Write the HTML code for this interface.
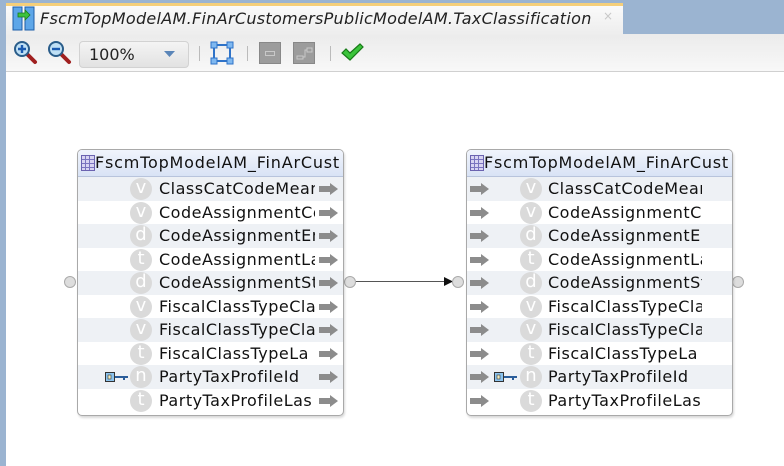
<!DOCTYPE html>
<html><head><meta charset="utf-8"><style>
*{margin:0;padding:0;box-sizing:border-box}
body{width:784px;height:466px;position:relative;overflow:hidden;background:#fff;font-family:"DejaVu Sans","Liberation Sans",sans-serif}
.abs{position:absolute}
svg{display:block}
.box{position:absolute;top:149px;width:267px;height:267px;border:1px solid #a9a9a9;border-radius:5px;background:#fff;box-shadow:1px 2px 2px rgba(0,0,0,.15);overflow:hidden}
.hdr{position:absolute;left:0;top:0;width:100%;height:27px;background:linear-gradient(#f0f4fc,#d9e3f5);border-bottom:1px solid #b8c4dc;font-size:16px;letter-spacing:0.8px;line-height:26px;color:#111;padding-left:17px;white-space:nowrap;overflow:hidden}
.grid{position:absolute;left:3px;top:5px;width:14px;height:16px;border:1px solid #6b63b0;background:
linear-gradient(90deg,transparent 3px,#7a74c0 3px,#7a74c0 4px,transparent 4px,transparent 7px,#7a74c0 7px,#7a74c0 8px,transparent 8px),
linear-gradient(transparent 3px,#7a74c0 3px,#7a74c0 4px,transparent 4px,transparent 7px,#7a74c0 7px,#7a74c0 8px,transparent 8px,transparent 11px,#7a74c0 11px,#7a74c0 12px,transparent 12px),#d8d4f2}
.row{position:absolute;left:0;width:100%;height:23.5px}
.s{background:#eef1f5}
.ic{position:absolute;width:22px;height:22px;border-radius:50%;background:#dadada;color:#fff;font-size:18px;line-height:20px;text-align:center}
.tx{position:absolute;font-size:16px;letter-spacing:0.5px;line-height:23px;color:#111;white-space:nowrap;overflow:hidden}
.ar{position:absolute;width:20px;height:12px}
.port{position:absolute;width:12px;height:12px;border-radius:50%;background:#ddd;border:1px solid #aaa}
</style></head><body>
<div class="abs" style="left:0;top:0;width:784px;height:466px;background:#9bb4d1"></div>
<div class="abs" style="left:6px;top:34px;width:778px;height:432px;background:#fff"></div>
<div class="abs" style="left:6px;top:34px;width:778px;height:38px;background:linear-gradient(#ebebeb,#f8f8f8);border-bottom:1px solid #d0d0d0"></div>
<div class="abs" style="left:6px;top:3px;width:617px;height:32px;background:linear-gradient(#fafafa,#ededed);border-top:3px solid #f5cf7a"></div>
<svg class="abs" style="left:12px;top:6px" width="24" height="26" viewBox="0 0 24 26"><rect x="1" y="1" width="9" height="23" fill="#5da6e8" stroke="#1f5fa8"/><rect x="13" y="1" width="9" height="23" fill="#5da6e8" stroke="#1f5fa8"/><path d="M6 7h7v-3l5 5-5 5v-3H6z" fill="#3cc23c" stroke="#187a18" stroke-width=".8"/></svg>
<div class="abs" style="left:40px;top:9px;font-size:16px;letter-spacing:0.3px;font-style:italic;color:#222;white-space:nowrap">FscmTopModelAM.FinArCustomersPublicModelAM.TaxClassification</div>
<div class="abs" style="left:603px;top:9px;font-size:12px;color:#c8c8c8">×</div>
<svg class="abs" style="left:13px;top:40px" width="26" height="26" viewBox="0 0 26 26"><path d="M14 14l8 8" stroke="#a02020" stroke-width="4" stroke-linecap="round"/><circle cx="9" cy="9" r="7" fill="#bfe0f5" stroke="#2a5d8a" stroke-width="2"/><path d="M5 9h8M9 5v8" stroke="#1a5ab0" stroke-width="2.4"/></svg>
<svg class="abs" style="left:47px;top:40px" width="26" height="26" viewBox="0 0 26 26"><path d="M14 14l8 8" stroke="#a02020" stroke-width="4" stroke-linecap="round"/><circle cx="9" cy="9" r="7" fill="#bfe0f5" stroke="#2a5d8a" stroke-width="2"/><path d="M5 9h8" stroke="#1a5ab0" stroke-width="2.4"/></svg>
<div class="abs" style="left:79px;top:41px;width:110px;height:27px;border-radius:4px;background:linear-gradient(#f4f4f4,#e2e2e2);border:1px solid #d2d2d2;font-size:16px;line-height:26px;padding-left:9px;color:#222">100%</div>
<svg class="abs" style="left:164px;top:50px" width="12" height="8"><path d="M0 1h11L5.5 7z" fill="#5a85b8"/></svg>
<div class="abs" style="left:199px;top:46px;width:1px;height:15px;background:#bbb"></div>
<svg class="abs" style="left:210px;top:41px" width="24" height="24" viewBox="0 0 24 24"><rect x="4" y="4" width="16" height="16" fill="none" stroke="#2f73c8" stroke-width="2"/><g fill="#7fb8f0" stroke="#2f73c8"><rect x="1" y="1" width="6" height="6"/><rect x="17" y="1" width="6" height="6"/><rect x="1" y="17" width="6" height="6"/><rect x="17" y="17" width="6" height="6"/></g></svg>
<div class="abs" style="left:247px;top:46px;width:1px;height:15px;background:#bbb"></div>
<div class="abs" style="left:259px;top:42px;width:22px;height:22px;background:#9c9c9c;border:1px solid #888"><div class="abs" style="left:5px;top:8px;width:10px;height:5px;border:1px solid #c8c8c8"></div></div>
<div class="abs" style="left:293px;top:42px;width:22px;height:22px;background:#9c9c9c;border:1px solid #888"><svg class="abs" style="left:2px;top:2px" width="17" height="17"><path d="M1 14h6v-3h-6zM7 12h2v-7h2M11 3h5v4h-5z" fill="none" stroke="#c8c8c8"/></svg></div>
<div class="abs" style="left:330px;top:46px;width:1px;height:15px;background:#bbb"></div>
<svg class="abs" style="left:340px;top:43px" width="24" height="20" viewBox="0 0 24 20"><path d="M2 10l4-4 4 4 10-9 3 3-13 13z" fill="#3bc43b" stroke="#187a18" stroke-width="1.2"/></svg>
<div class="abs" style="left:356px;top:281px;width:92px;height:1px;background:#555"></div>
<svg class="abs" style="left:444px;top:276px" width="10" height="11"><path d="M0 1l9 4.5L0 10z" fill="#111"/></svg>
<div class="port" style="left:64px;top:276px"></div>
<div class="port" style="left:344px;top:276px"></div>
<div class="port" style="left:452px;top:276px"></div>
<div class="port" style="left:732px;top:276px"></div>
<div class="box" style="left:77px" id="L"></div>
<div class="box" style="left:466px" id="R"></div>
<script>
var names=[["v","ClassCatCodeMeaning"],["v","CodeAssignmentCode "],["d","CodeAssignmentEnd"],["t","CodeAssignmentLast"],["d","CodeAssignmentStart"],["v","FiscalClassTypeClass"],["v","FiscalClassTypeClass"],["t","FiscalClassTypeLa"],["n","PartyTaxProfileId"],["t","PartyTaxProfileLas"]];
var arrow='<svg width="20" height="12" viewBox="0 0 20 12"><path d="M0 3h11V0l8 6-8 6V9H0z" fill="#8c8c8c"/></svg>';
var key='<svg width="24" height="10" viewBox="0 0 24 10"><rect x="0.5" y="0.5" width="9" height="9" fill="#8cc4ee" stroke="#333"/><rect x="3" y="3" width="3" height="4" fill="#f4f0c0" stroke="#333" stroke-width=".6"/><path d="M10 4h13v2h-3v2h-2V6h-8z" fill="#2a5d9a"/></svg>';
function build(id,right){
 var b=document.getElementById(id),h='<div class="hdr"><div class="grid"></div>FscmTopModelAM_FinArCust</div>';
 for(var i=0;i<10;i++){
  var t=27+i*23.5;
  h+='<div class="row'+(i%2==0?' s':'')+'" style="top:'+t+'px"></div>';
 }
 for(var i=0;i<10;i++){
  var t=27+i*23.5;
  h+='<div class="ic" style="left:'+(right?53:52)+'px;top:'+(t+1)+'px">'+names[i][0]+'</div>';
  h+='<div class="tx" style="left:81px;top:'+t+'px;width:'+(right?154:156)+'px">'+names[i][1]+'</div>';
  h+='<div class="ar" style="left:'+(right?3:241)+'px;top:'+(t+6)+'px">'+arrow+'</div>';
  if(i==8)h+='<div class="abs" style="left:27px;top:'+(t+7)+'px">'+key+'</div>';
 }
 b.innerHTML=h;
}
build("L",false);build("R",true);
</script>
</body></html>
